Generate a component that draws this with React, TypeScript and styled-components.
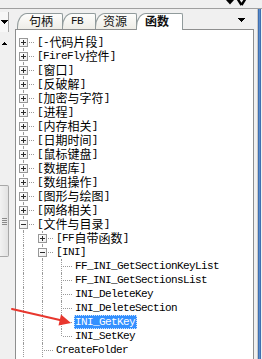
import React from 'react';
import styled, { createGlobalStyle, css } from 'styled-components';

const Global = createGlobalStyle`
  html, body { margin: 0; padding: 0; background: #f0f0f0; }
  body { width: 262px; height: 359px; overflow: hidden; }
`;

const Root = styled.div`
  position: relative;
  width: 262px;
  height: 359px;
  overflow: hidden;
  background: #f0f0f0;
  display: flex;
  flex-direction: column;
  font-family: "Liberation Mono", "Noto Sans CJK SC", monospace;
`;

const TitleBar = styled.div`
  height: 8px;
  flex: none;
  border-bottom: 1px solid #a0a0a0;
  display: flex;
  justify-content: flex-end;
  align-items: flex-start;
  padding-right: 16px;
  overflow: hidden;
`;

const CaptionIcons = styled.svg`
  display: block;
  flex: none;
`;

const Body = styled.div`
  flex: 1;
  display: flex;
  min-height: 0;
`;

const LeftStrip = styled.div`
  width: 9px;
  flex: none;
  display: flex;
  flex-direction: column;
  align-items: stretch;
`;

const Combo = styled.div`
  margin-top: 3px;
  height: 20px;
  border-right: 1px solid #a5a5a5;
  background: #f7f7f7;
  display: flex;
  align-items: center;
  justify-content: flex-start;
  padding-left: 1px;
`;

const UpButton = styled.div`
  height: 10px;
  margin-top: 6px;
  display: flex;
  align-items: center;
  padding-left: 2px;
`;

const Thumb = styled.div`
  margin-top: 137px;
  height: 72px;
  box-sizing: border-box;
  border: 1px solid #a8a8a8;
  border-left: none;
  border-radius: 0 2px 2px 0;
  background: linear-gradient(90deg, #f2f2f2, #e2e2e2);
  display: flex;
  flex-direction: column;
  justify-content: center;
  align-items: flex-start;
  gap: 1px;
  padding-left: 2px;
`;

const Grip = styled.span`
  width: 5px;
  height: 1px;
  background: #8a8a8a;
`;

const Main = styled.div`
  margin-left: 6px;
  width: 239px;
  flex: none;
  display: flex;
  flex-direction: column;
`;

const TabRow = styled.div`
  height: 20px;
  flex: none;
  display: flex;
  align-items: flex-end;
  padding-left: 2px;
`;

const Tab = styled.div<{ $w: number; $pl: number; $active?: boolean }>`
  position: relative;
  box-sizing: border-box;
  width: ${(p) => p.$w}px;
  height: 16px;
  padding-left: ${(p) => p.$pl}px;
  margin-right: -1px;
  border: 1px solid #919b9c;
  border-bottom: none;
  border-top-left-radius: 10px 14px;
  border-top-right-radius: 2px;
  background: linear-gradient(#fdfdfc, #eeede7);
  font-size: 12px;
  line-height: 14px;
  color: #111;
  white-space: nowrap;
  ${(p) =>
    p.$active &&
    css`
      z-index: 2;
      height: 17px;
      margin-bottom: -1px;
      background: #fff;
      font-weight: bold;
    `}
`;

const TabMenu = styled.div`
  margin-left: auto;
  margin-right: 9px;
  align-self: center;
  margin-top: 2px;
  display: flex;
`;

const Panel = styled.div`
  flex: 1;
  background: #fff;
  border: 1px solid #8e8f8f;
  border-bottom: none;
  padding-top: 5px;
  overflow: hidden;
`;

const RightEdge = styled.div`
  margin-left: 3px;
  width: 4px;
  flex: none;
  display: flex;
`;

const EdgeLine = styled.div<{ $c: string }>`
  width: 1px;
  background: ${(p) => p.$c};
`;

const Row = styled.div`
  display: flex;
  height: 14px;
  align-items: stretch;
`;

const Guide = styled.div<{ $on: boolean }>`
  width: 19px;
  flex: none;
  position: relative;
  ${(p) =>
    p.$on &&
    css`
      &::before {
        content: '';
        position: absolute;
        left: 7px;
        top: 0;
        bottom: 0;
        border-left: 1px dotted #9a9a9a;
      }
    `}
`;

const Joint = styled.div<{ $first?: boolean; $last?: boolean }>`
  width: 19px;
  flex: none;
  position: relative;
  &::before {
    content: '';
    position: absolute;
    left: 7px;
    top: ${(p) => (p.$first ? '7px' : '0')};
    ${(p) => (p.$last ? 'height: 7px;' : 'bottom: 0;')}
    border-left: 1px dotted #9a9a9a;
  }
  &::after {
    content: '';
    position: absolute;
    left: 9px;
    right: 1px;
    top: 7px;
    border-top: 1px dotted #9a9a9a;
  }
`;

const Expander = styled.span`
  position: absolute;
  left: 3px;
  top: 3px;
  width: 9px;
  height: 9px;
  box-sizing: border-box;
  border: 1px solid #979797;
  background: linear-gradient(135deg, #ffffff, #ececec);
  z-index: 1;
  display: flex;
  align-items: center;
  justify-content: center;
`;

const Label = styled.span<{ $sel?: boolean }>`
  margin-left: 1px;
  padding: 0 1px;
  height: 14px;
  line-height: 14px;
  white-space: nowrap;
  color: #000;
  display: flex;
  align-items: flex-start;
  ${(p) =>
    p.$sel &&
    css`
      background: #3390ff;
      color: #fff;
      outline: 1px dotted #cfe4ff;
      outline-offset: -1px;
    `}
`;

const Han = styled.span`
  display: inline-block;
  height: 14px;
  line-height: 14px;
  font-family: "Noto Sans CJK SC", sans-serif;
  font-size: 12px;
`;

const Lat = styled.span`
  display: inline-block;
  height: 14px;
  line-height: 14px;
  font-family: "Liberation Mono", monospace;
  font-size: 11px;
  letter-spacing: -0.6px;
  padding-right: 0.6px;
`;

const Overlay = styled.svg`
  position: absolute;
  left: 0;
  top: 0;
  pointer-events: none;
  z-index: 5;
`;

const isCJK = (c: string) => /[\u2e80-\u9fff\uff00-\uffef]/.test(c);

function Mixed({ text }: { text: string }) {
  const parts: { t: string; cjk: boolean }[] = [];
  for (const ch of text) {
    const c = isCJK(ch);
    const last = parts[parts.length - 1];
    if (last && last.cjk === c) last.t += ch;
    else parts.push({ t: ch, cjk: c });
  }
  return (
    <>
      {parts.map((p, i) =>
        p.cjk ? <Han key={i}>{p.t}</Han> : <Lat key={i}>{p.t}</Lat>
      )}
    </>
  );
}

type Kind = 'plus' | 'minus' | 'leaf';
type Node = {
  label: string;
  guides: boolean[];
  kind: Kind;
  first?: boolean;
  last?: boolean;
  selected?: boolean;
};

const level1 = [
  '[-代码片段]',
  '[FireFly控件]',
  '[窗口]',
  '[反破解]',
  '[加密与字符]',
  '[进程]',
  '[内存相关]',
  '[日期时间]',
  '[鼠标键盘]',
  '[数据库]',
  '[数组操作]',
  '[图形与绘图]',
  '[网络相关]',
];

const nodes: Node[] = [
  ...level1.map((l, i) => ({ label: l, guides: [], kind: 'plus' as Kind, first: i === 0 })),
  { label: '[文件与目录]', guides: [], kind: 'minus' },
  { label: '[FF自带函数]', guides: [true], kind: 'plus' },
  { label: '[INI]', guides: [true], kind: 'minus' },
  { label: 'FF_INI_GetSectionKeyList', guides: [true, true], kind: 'leaf' },
  { label: 'FF_INI_GetSectionsList', guides: [true, true], kind: 'leaf' },
  { label: 'INI_DeleteKey', guides: [true, true], kind: 'leaf' },
  { label: 'INI_DeleteSection', guides: [true, true], kind: 'leaf' },
  { label: 'INI_GetKey', guides: [true, true], kind: 'leaf', selected: true },
  { label: 'INI_SetKey', guides: [true, true], kind: 'leaf', last: true },
  { label: 'CreateFolder', guides: [true], kind: 'leaf' },
];

function Sign({ plus }: { plus: boolean }) {
  return (
    <svg width="5" height="5" viewBox="0 0 5 5" shapeRendering="crispEdges">
      <rect x="0" y="2" width="5" height="1" fill="#2b2b2b" />
      {plus && <rect x="2" y="0" width="1" height="5" fill="#2b2b2b" />}
    </svg>
  );
}

function Tri({ up, w = 7 }: { up?: boolean; w?: number }) {
  const h = Math.ceil(w / 2);
  return (
    <svg width={w} height={h} viewBox={`0 0 ${w} ${h}`} shapeRendering="crispEdges">
      <polygon
        points={up ? `0,${h} ${w},${h} ${w / 2},0` : `0,0 ${w},0 ${w / 2},${h}`}
        fill="#000"
      />
    </svg>
  );
}

export default function App() {
  return (
    <Root>
      <Global />
      <TitleBar>
        <CaptionIcons width="20" height="7" viewBox="0 0 20 7">
          <polygon points="0,0 8,0 4,4.5" fill="#000" />
          <path d="M11 -2 L15.5 5 M20 -2 L15.5 5" stroke="#000" strokeWidth="2.4" fill="none" />
        </CaptionIcons>
      </TitleBar>
      <Body>
        <LeftStrip>
          <Combo>
            <Tri w={7} />
          </Combo>
          <UpButton>
            <Tri up w={5} />
          </UpButton>
          <Thumb>
            <Grip />
            <Grip />
            <Grip />
            <Grip />
          </Thumb>
        </LeftStrip>
        <Main>
          <TabRow>
            <Tab $w={46} $pl={11}>
              <Mixed text="句柄" />
            </Tab>
            <Tab $w={34} $pl={8}>
              <Lat>FB</Lat>
            </Tab>
            <Tab $w={42} $pl={7}>
              <Mixed text="资源" />
            </Tab>
            <Tab $w={47} $pl={8} $active>
              <Mixed text="函数" />
            </Tab>
            <TabMenu>
              <Tri w={7} />
            </TabMenu>
          </TabRow>
          <Panel>
            {nodes.map((n, i) => (
              <Row key={i}>
                {n.guides.map((g, j) => (
                  <Guide key={j} $on={g} />
                ))}
                <Joint $first={n.first} $last={n.last}>
                  {n.kind !== 'leaf' && (
                    <Expander>
                      <Sign plus={n.kind === 'plus'} />
                    </Expander>
                  )}
                </Joint>
                <Label $sel={n.selected}>
                  <Mixed text={n.label} />
                </Label>
              </Row>
            ))}
          </Panel>
        </Main>
        <RightEdge>
          <EdgeLine $c="#c9c9c9" />
          <EdgeLine $c="#3f6fb0" />
          <EdgeLine $c="#5a8ccc" />
          <EdgeLine $c="#3f6fb0" />
        </RightEdge>
      </Body>
      <Overlay width="262" height="359" viewBox="0 0 262 359">
        <line x1="12" y1="309" x2="62" y2="320.5" stroke="#e8372e" strokeWidth="2" strokeLinecap="round" />
        <polygon points="71,323 58.5,325.5 61,314.5" fill="#e8372e" />
      </Overlay>
    </Root>
  );
}
